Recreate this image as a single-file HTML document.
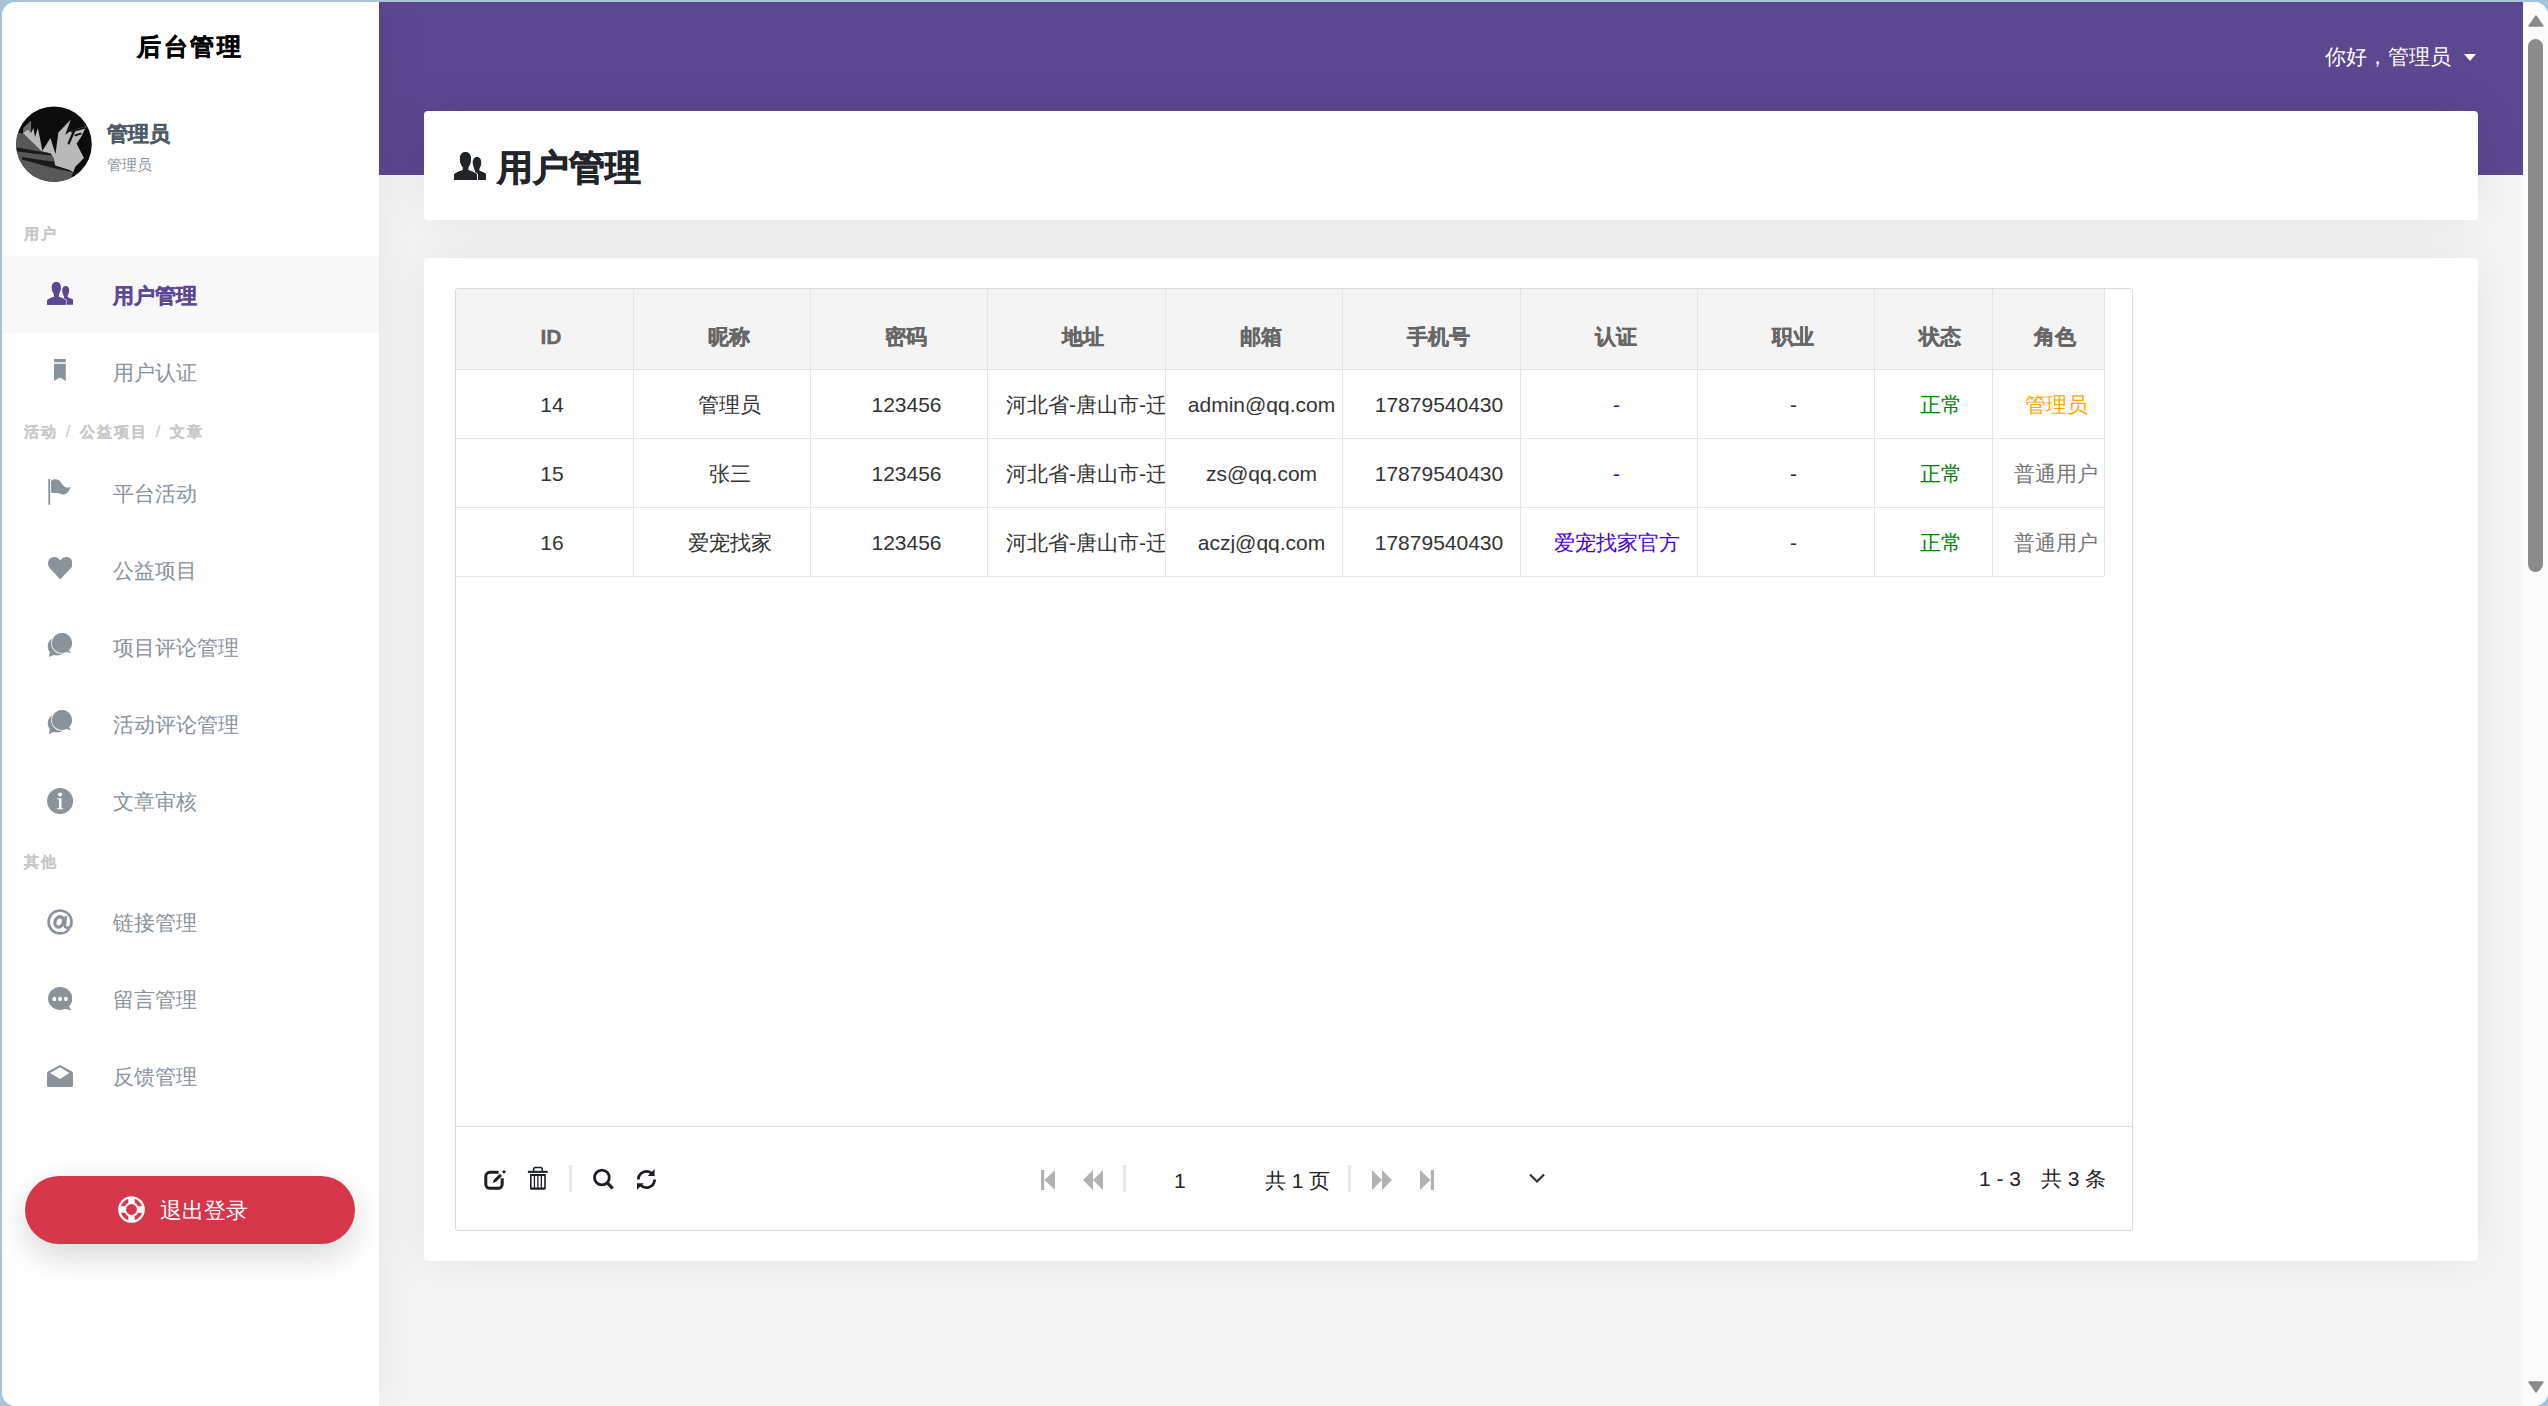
<!DOCTYPE html>
<html><head><meta charset="utf-8">
<style>
*{box-sizing:border-box;margin:0;padding:0}
html,body{width:2548px;height:1406px;overflow:hidden;background:#a6c3da;font-family:"Liberation Sans",sans-serif}
.win{position:absolute;left:2px;top:2px;width:2546px;height:1404px;border-radius:14px;overflow:hidden;background:#f5f5f5}
#pg{position:absolute;left:-2px;top:-2px;width:2548px;height:1406px}
.abs{position:absolute}
#side{position:absolute;left:0;top:0;width:379px;height:1406px;background:#fff;box-shadow:0 0 50px rgba(0,0,0,.075);z-index:3}
#hdr{position:absolute;left:379px;top:0;width:2144px;height:175px;background:#5c4791}
#sb{position:absolute;left:2523px;top:0;width:25px;height:1406px;background:#fcfcfc;z-index:5}
.t{position:absolute;white-space:nowrap;line-height:1;z-index:5}
.lab{position:absolute;left:24px;font-size:15px;font-weight:bold;color:#c9c9c9;-webkit-text-stroke:0.3px #c9c9c9;letter-spacing:2px;word-spacing:1.5px;white-space:nowrap;line-height:14px;z-index:5}
.card{position:absolute;background:#fff;border-radius:4px;z-index:1;box-shadow:0 0 50px rgba(0,0,0,.075)}
.cell{position:absolute;text-align:center;font-size:21px;line-height:21px;color:#333;overflow:hidden;white-space:nowrap;z-index:4}
.cell.hd{font-weight:bold;color:#666;-webkit-text-stroke:0.35px #666}
</style></head><body>
<div class="win"><div id="pg">
<div id="hdr"></div>
<div id="side"></div>
<div class="t" style="left:137px;top:35px;font-size:24px;color:#000;font-weight:bold;letter-spacing:2.5px;-webkit-text-stroke:0.5px #000">后台管理</div>
<svg class="abs" style="left:16px;top:106px;z-index:5" width="76" height="76" viewBox="0 0 76 76"><defs><clipPath id="cav"><circle cx="38" cy="38.2" r="37.8"/></clipPath></defs><g clip-path="url(#cav)"><rect x="-1" y="-1" width="78" height="78" fill="#0c0c0c"/>
<path fill="#b9b9b9" d="M7.1 26.4 L12.2 23.6 L15.1 27.0 L17.3 21.9 L19.1 31.0 L21.9 21.9 L26.4 44.7 L34.4 32.1 L39.5 48.1 L42.4 26.4 L54.9 13.4 L49.2 28.7 L54.9 24.7 L70.3 20.2 L65.1 31.0 L60.6 37.8 L68.0 52.1 L59.5 60.6 L57.2 66.3 L39.0 59.5 L37.8 52.6 L34.4 47.5 L25.3 45.2 L7.1 27.6Z"/>
<path fill="#585858" d="M-0.3 26.4 L7.1 27.6 L25.3 45.2 L34.4 47.5 L37.8 52.6 L39.0 59.5 L57.2 66.3 L54.9 73.1 L32.1 78.8 L-0.3 78.8Z"/>
<path fill="#1a1a1a" d="M-0.3 41.2 L25.3 45.8 L34.4 47.5 L35.6 49.5 L20.8 48.1 L-0.3 45.2Z"/>
<path fill="#1a1a1a" d="M6.0 50.9 L26.4 54.3 L37.8 55.5 L39.0 59.5 L53.8 64.0 L57.2 66.3 L37.8 62.3 L6.0 53.5Z"/>
<path fill="#6b6b6b" d="M7.1 21.9 L15.1 14.5 L15.1 26.4 L12.2 23.6 L7.1 26.4Z"/>
<path fill="#111" d="M57.7 23.0 L59.5 24.7 L53.2 39.0 L51.5 37.3Z M54.3 24.7 L69.1 20.8 L69.7 22.5 L54.9 26.4Z M58.3 28.7 L65.1 26.4 L65.7 28.2 L58.9 30.4Z"/></g></svg>
<div class="t" style="left:107px;top:123px;font-size:21px;color:#4f5b67;font-weight:bold;-webkit-text-stroke:0.4px #4f5b67">管理员</div>
<div class="t" style="left:107px;top:157px;font-size:15px;color:#8a96a2;">管理员</div>
<div class="lab" style="top:227px">用户</div>
<div class="lab" style="top:425px">活动 <span style="font-weight:normal;-webkit-text-stroke:0;font-size:17px">/</span> 公益项目 <span style="font-weight:normal;-webkit-text-stroke:0;font-size:17px">/</span> 文章</div>
<div class="lab" style="top:855px">其他</div>
<div class="abs" style="left:2px;top:256px;width:377px;height:78px;background:#f8f8f8;z-index:4"></div>
<div class="t" style="left:113px;top:285px;font-size:21px;color:#5d4896;font-weight:bold;-webkit-text-stroke:0.4px #5d4896">用户管理</div>
<div class="t" style="left:113px;top:362px;font-size:21px;color:#8a939c;">用户认证</div>
<div class="t" style="left:113px;top:483px;font-size:21px;color:#8a939c;">平台活动</div>
<div class="t" style="left:113px;top:560px;font-size:21px;color:#8a939c;">公益项目</div>
<div class="t" style="left:113px;top:637px;font-size:21px;color:#8a939c;">项目评论管理</div>
<div class="t" style="left:113px;top:714px;font-size:21px;color:#8a939c;">活动评论管理</div>
<div class="t" style="left:113px;top:791px;font-size:21px;color:#8a939c;">文章审核</div>
<div class="t" style="left:113px;top:912px;font-size:21px;color:#8a939c;">链接管理</div>
<div class="t" style="left:113px;top:989px;font-size:21px;color:#8a939c;">留言管理</div>
<div class="t" style="left:113px;top:1066px;font-size:21px;color:#8a939c;">反馈管理</div>
<svg class="abs" style="left:47px;top:282px;z-index:5" width="26.00" height="23.00" viewBox="0 0 26 23"><path fill="#5d4896" d="M18.7 4.1C21 4.1 22.2 6 22.2 8.6 22.2 10.8 21.2 12.8 20.7 13.6V15.3C22.5 15.8 24.5 16.6 26 17.6V22.7H17V15.1C16.2 12.8 15.2 10.8 15.2 8.6 15.2 6 16.4 4.1 18.7 4.1Z"/><path fill="#5d4896" stroke="#f8f8f8" stroke-width="1.6" paint-order="stroke" d="M9.3 0C12.2 0 13.8 2.4 13.8 5.8 13.8 8.5 12.6 11 11.6 12.2V14.8C14.5 15.6 17 16.8 18.7 18.3V22.7H0V18.3C1.7 16.8 4.2 15.6 7.2 14.8V12.2C6.2 11 4.8 8.5 4.8 5.8 4.8 2.4 6.4 0 9.3 0Z"/><path fill="#5d4896" d="M9.3 0C12.2 0 13.8 2.4 13.8 5.8 13.8 8.5 12.6 11 11.6 12.2V14.8C14.5 15.6 17 16.8 18.7 18.3V22.7H0V18.3C1.7 16.8 4.2 15.6 7.2 14.8V12.2C6.2 11 4.8 8.5 4.8 5.8 4.8 2.4 6.4 0 9.3 0Z"/></svg>
<svg class="abs" style="left:54px;top:359px;z-index:5" width="12" height="22" viewBox="0 0 12 22"><path fill="#8a939c" d="M0 0H11.8V3.2H0ZM0 4.8H11.8V22L5.9 18.5 0 22Z"/></svg>
<svg class="abs" style="left:48px;top:479px;z-index:5" width="24" height="26" viewBox="0 0 24 26"><path fill="#8a939c" d="M0.3 0H2.2V25.7H0.3Z"/><path fill="#8a939c" d="M3.1 2.5C3.1 0.8 5.5 0.2 7.5 0.2 10 0.2 12 1.5 14 5 15.5 7.5 17.5 8.6 20 8.6 21.5 8.6 22.5 8 22.9 7.5 21.8 11 19 15.5 15.5 15.6 13 15.6 12 14.2 9 14 6.5 13.8 4.5 14 3.1 13.8Z"/></svg>
<svg class="abs" style="left:47.7px;top:556.8px;z-index:5" width="24.6" height="22.4" viewBox="0 0 24.6 22.4"><path fill="#8a939c" d="M12.3 3.4C10.5 1.2 8.5 0 6.2 0 2.8 0 0 2.8 0 6.6 0 8.6 0.8 10.2 2 11.4L12.3 22.4 22.6 11.4C23.8 10.2 24.6 8.6 24.6 6.6 24.6 2.8 21.8 0 18.4 0 16 0 14 1.2 12.3 3.4Z"/></svg>
<svg class="abs" style="left:47px;top:632px;z-index:5" width="26" height="26" viewBox="0 0 26 26"><circle cx="10" cy="14.3" r="9.3" fill="#8a939c"/><path fill="#8a939c" d="M3 19L1.8 25.1 8 22.5Z"/><circle cx="15" cy="11" r="10" fill="#8a939c" stroke="#fff" stroke-width="1.6" paint-order="stroke"/><circle cx="15" cy="11" r="10" fill="#8a939c"/><path fill="#8a939c" d="M21 16.5L24 21.2 18 19.5Z"/></svg>
<svg class="abs" style="left:47px;top:709px;z-index:5" width="26" height="26" viewBox="0 0 26 26"><circle cx="10" cy="14.3" r="9.3" fill="#8a939c"/><path fill="#8a939c" d="M3 19L1.8 25.1 8 22.5Z"/><circle cx="15" cy="11" r="10" fill="#8a939c" stroke="#fff" stroke-width="1.6" paint-order="stroke"/><circle cx="15" cy="11" r="10" fill="#8a939c"/><path fill="#8a939c" d="M21 16.5L24 21.2 18 19.5Z"/></svg>
<svg class="abs" style="left:46.8px;top:788px;z-index:5" width="26.2" height="26.2" viewBox="0 0 26.2 26.2"><circle cx="13.1" cy="13" r="13.05" fill="#8a939c"/><circle cx="13.1" cy="6.5" r="2" fill="#fff"/><path fill="#fff" d="M10.1 10.2H14.5V20.2H16.1V21.2H10.1V20.2H12V11.2H10.1Z"/></svg>
<svg class="abs" style="left:46.8px;top:909px;z-index:5" width="26.2" height="26.2" viewBox="0 0 26.2 26.2"><path fill="none" stroke="#8a939c" stroke-width="2.7" d="M22.12 20.05A11.45 11.45 0 1 1 24.55 13.00C24.55 16.6 22.9 18.9 20.6 18.9 18.6 18.9 17.6 17.9 17.8 16L18.9 7.2"/><ellipse cx="12.2" cy="12.9" rx="4.1" ry="5.3" transform="rotate(20 12.2 12.9)" fill="none" stroke="#8a939c" stroke-width="3.3"/></svg>
<svg class="abs" style="left:47.8px;top:987px;z-index:5" width="24.4" height="24" viewBox="0 0 24.4 24"><ellipse cx="12.2" cy="11.5" rx="12.2" ry="11.45" fill="#8a939c"/><path fill="#8a939c" d="M20 17L23.1 23.6 16.5 21.5Z"/><ellipse cx="6.4" cy="11.9" rx="1.9" ry="2.2" fill="#fff"/><ellipse cx="12.1" cy="11.9" rx="1.9" ry="2.2" fill="#fff"/><ellipse cx="17.9" cy="11.9" rx="1.9" ry="2.2" fill="#fff"/></svg>
<svg class="abs" style="left:47px;top:1064.5px;z-index:5" width="26" height="22.2" viewBox="0 0 26 22.2"><path fill="#8a939c" d="M13 0L25 6.6Q26 7.3 26 8.5V20.2Q26 22.2 24 22.2H2Q0 22.2 0 20.2V8.5Q0 7.3 1 6.6Z"/><path fill="#fff" d="M13 2.3L22.4 8 13 14 3.1 8Z"/></svg>
<div class="abs" style="left:25px;top:1176px;width:330px;height:68px;border-radius:34px;background:#d63649;box-shadow:0 12px 34px rgba(0,0,0,.16);z-index:5"></div>
<svg class="abs" style="left:117.8px;top:1195.8px;z-index:5" width="27" height="27" viewBox="0 0 27 27"><circle cx="13.5" cy="13.5" r="13.3" fill="#fff"/><circle cx="13.5" cy="13.5" r="9.25" fill="none" stroke="#d63649" stroke-width="3.5"/><path fill="#fff" d="M2 10.3H25V16.7H2ZM10.3 2H16.7V25H10.3Z"/><circle cx="13.5" cy="13.5" r="5.4" fill="#d63649"/></svg>
<div class="t" style="left:160px;top:1200px;font-size:22px;color:#fff;z-index:6">退出登录</div>
<div class="t" style="left:2325px;top:46px;font-size:21px;color:#fff;">你好，管理员</div>
<div class="abs" style="left:2464px;top:54px;width:0;height:0;border-left:6.5px solid transparent;border-right:6.5px solid transparent;border-top:7px solid #fff;z-index:2"></div>
<div class="card" style="left:424px;top:111px;width:2054px;height:109px"></div>
<svg class="abs" style="left:454px;top:152px;z-index:5" width="31.98" height="28.29" viewBox="0 0 26 23"><path fill="#212529" d="M18.7 4.1C21 4.1 22.2 6 22.2 8.6 22.2 10.8 21.2 12.8 20.7 13.6V15.3C22.5 15.8 24.5 16.6 26 17.6V22.7H17V15.1C16.2 12.8 15.2 10.8 15.2 8.6 15.2 6 16.4 4.1 18.7 4.1Z"/><path fill="#212529" stroke="#fff" stroke-width="1.6" paint-order="stroke" d="M9.3 0C12.2 0 13.8 2.4 13.8 5.8 13.8 8.5 12.6 11 11.6 12.2V14.8C14.5 15.6 17 16.8 18.7 18.3V22.7H0V18.3C1.7 16.8 4.2 15.6 7.2 14.8V12.2C6.2 11 4.8 8.5 4.8 5.8 4.8 2.4 6.4 0 9.3 0Z"/><path fill="#212529" d="M9.3 0C12.2 0 13.8 2.4 13.8 5.8 13.8 8.5 12.6 11 11.6 12.2V14.8C14.5 15.6 17 16.8 18.7 18.3V22.7H0V18.3C1.7 16.8 4.2 15.6 7.2 14.8V12.2C6.2 11 4.8 8.5 4.8 5.8 4.8 2.4 6.4 0 9.3 0Z"/></svg>
<div class="t" style="left:497px;top:150px;font-size:36px;color:#212529;font-weight:bold;z-index:5;-webkit-text-stroke:0.7px #212529">用户管理</div>
<div class="card" style="left:424px;top:258px;width:2054px;height:1003px"></div>
<div class="abs" style="left:455px;top:288px;width:1678px;height:943px;border:1px solid #dbdbdb;border-radius:3px;background:#fff;z-index:2"></div>
<div class="abs" style="left:456px;top:289px;width:1649px;height:80px;background:#f4f4f4;z-index:2"></div>
<div class="abs" style="left:456px;top:369px;width:1649px;height:1px;background:#e6e6e6;z-index:3"></div>
<div class="abs" style="left:456px;top:438px;width:1649px;height:1px;background:#e6e6e6;z-index:3"></div>
<div class="abs" style="left:456px;top:507px;width:1649px;height:1px;background:#e6e6e6;z-index:3"></div>
<div class="abs" style="left:456px;top:576px;width:1649px;height:1px;background:#e6e6e6;z-index:3"></div>
<div class="abs" style="left:633px;top:289px;width:1px;height:288px;background:#e6e6e6;z-index:3"></div>
<div class="abs" style="left:810px;top:289px;width:1px;height:288px;background:#e6e6e6;z-index:3"></div>
<div class="abs" style="left:987px;top:289px;width:1px;height:288px;background:#e6e6e6;z-index:3"></div>
<div class="abs" style="left:1165px;top:289px;width:1px;height:288px;background:#e6e6e6;z-index:3"></div>
<div class="abs" style="left:1342px;top:289px;width:1px;height:288px;background:#e6e6e6;z-index:3"></div>
<div class="abs" style="left:1520px;top:289px;width:1px;height:288px;background:#e6e6e6;z-index:3"></div>
<div class="abs" style="left:1697px;top:289px;width:1px;height:288px;background:#e6e6e6;z-index:3"></div>
<div class="abs" style="left:1874px;top:289px;width:1px;height:288px;background:#e6e6e6;z-index:3"></div>
<div class="abs" style="left:1992px;top:289px;width:1px;height:288px;background:#e6e6e6;z-index:3"></div>
<div class="abs" style="left:2104px;top:289px;width:1px;height:288px;background:#e6e6e6;z-index:3"></div>
<div class="cell hd" style="left:469px;top:326px;width:164px">ID</div>
<div class="cell hd" style="left:647px;top:326px;width:163px">昵称</div>
<div class="cell hd" style="left:824px;top:326px;width:163px">密码</div>
<div class="cell hd" style="left:1001px;top:326px;width:164px">地址</div>
<div class="cell hd" style="left:1179px;top:326px;width:163px">邮箱</div>
<div class="cell hd" style="left:1356px;top:326px;width:164px">手机号</div>
<div class="cell hd" style="left:1534px;top:326px;width:163px">认证</div>
<div class="cell hd" style="left:1711px;top:326px;width:163px">职业</div>
<div class="cell hd" style="left:1888px;top:326px;width:104px">状态</div>
<div class="cell hd" style="left:2006px;top:326px;width:98px">角色</div>
<div class="cell" style="left:471px;top:394px;width:162px;">14</div>
<div class="cell" style="left:649px;top:394px;width:161px;">管理员</div>
<div class="cell" style="left:826px;top:394px;width:161px;">123456</div>
<div class="cell" style="left:988px;top:394px;width:177px;text-align:left;padding-left:18px">河北省-唐山市-迁安市</div>
<div class="cell" style="left:1181px;top:394px;width:161px;">admin@qq.com</div>
<div class="cell" style="left:1358px;top:394px;width:162px;">17879540430</div>
<div class="cell" style="left:1536px;top:394px;width:161px;color:#4b00e0;">-</div>
<div class="cell" style="left:1713px;top:394px;width:161px;">-</div>
<div class="cell" style="left:1890px;top:394px;width:102px;color:#008000;">正常</div>
<div class="cell" style="left:2008px;top:394px;width:96px;color:#ffa500;">管理员</div>
<div class="cell" style="left:471px;top:463px;width:162px;">15</div>
<div class="cell" style="left:649px;top:463px;width:161px;">张三</div>
<div class="cell" style="left:826px;top:463px;width:161px;">123456</div>
<div class="cell" style="left:988px;top:463px;width:177px;text-align:left;padding-left:18px">河北省-唐山市-迁安市</div>
<div class="cell" style="left:1181px;top:463px;width:161px;">zs@qq.com</div>
<div class="cell" style="left:1358px;top:463px;width:162px;">17879540430</div>
<div class="cell" style="left:1536px;top:463px;width:161px;color:#4b00e0;">-</div>
<div class="cell" style="left:1713px;top:463px;width:161px;">-</div>
<div class="cell" style="left:1890px;top:463px;width:102px;color:#008000;">正常</div>
<div class="cell" style="left:2008px;top:463px;width:96px;color:#777;">普通用户</div>
<div class="cell" style="left:471px;top:532px;width:162px;">16</div>
<div class="cell" style="left:649px;top:532px;width:161px;">爱宠找家</div>
<div class="cell" style="left:826px;top:532px;width:161px;">123456</div>
<div class="cell" style="left:988px;top:532px;width:177px;text-align:left;padding-left:18px">河北省-唐山市-迁安市</div>
<div class="cell" style="left:1181px;top:532px;width:161px;">aczj@qq.com</div>
<div class="cell" style="left:1358px;top:532px;width:162px;">17879540430</div>
<div class="cell" style="left:1536px;top:532px;width:161px;color:#4b00e0;">爱宠找家官方</div>
<div class="cell" style="left:1713px;top:532px;width:161px;">-</div>
<div class="cell" style="left:1890px;top:532px;width:102px;color:#008000;">正常</div>
<div class="cell" style="left:2008px;top:532px;width:96px;color:#777;">普通用户</div>
<div class="abs" style="left:456px;top:1126px;width:1676px;height:1px;background:#e2e2e2;z-index:3"></div>
<svg class="abs" style="left:482px;top:1167px;z-index:5" width="24" height="24" viewBox="0 0 24 24"><path fill="none" stroke="#1c1f24" stroke-width="3" d="M16.7 5.3H7.8A4 4 0 0 0 3.8 9.3V17.3A4 4 0 0 0 7.8 21.3H16.2A4 4 0 0 0 20.2 17.3V11.2"/><path fill="#1c1f24" d="M10.8 15.9L12 12.6 17.9 6.8 20 8.9 14.1 14.7Z"/><path fill="#1c1f24" d="M22 2.9L23.9 4.8 22 6.7 20.1 4.8Z"/></svg>
<svg class="abs" style="left:526px;top:1166px;z-index:5" width="24" height="26" viewBox="0 0 24 26"><path fill="#1c1f24" d="M1.9 4.8H21.7V6.9H1.9Z"/><path fill="none" stroke="#1c1f24" stroke-width="1.5" d="M7.6 5V3.4Q7.6 1.6 9.4 1.6H14.5Q16.3 1.6 16.3 3.4V5"/><path fill="#1c1f24" fill-rule="evenodd" d="M4 8.1H19.8V22.3Q19.8 23.8 18.3 23.8H5.5Q4 23.8 4 22.3ZM5.6 10V21.6H7.78V10ZM9.08 10V21.6H11.25V10ZM12.55 10V21.6H14.73V10ZM16.03 10V21.6H18.2V10Z"/></svg>
<div class="abs" style="left:569px;top:1165px;width:3px;height:27px;background:#e8e8e8;z-index:3"></div>
<svg class="abs" style="left:591px;top:1168px;z-index:5" width="24" height="24" viewBox="0 0 24 24"><circle cx="10.9" cy="9.5" r="7.4" fill="none" stroke="#1c1f24" stroke-width="2.8"/><path stroke="#1c1f24" stroke-width="3.2" d="M15.6 14.2L21.7 20.5"/></svg>
<svg class="abs" style="left:634px;top:1167px;z-index:5" width="24" height="24" viewBox="0 0 24 24"><path fill="none" stroke="#1c1f24" stroke-width="2.8" d="M4.4 12.5A8.1 8.1 0 0 1 18.2 6.8M20.6 12.5A8.1 8.1 0 0 1 6.8 18.2"/><path fill="#1c1f24" d="M20.6 2.1V8.9H13.7ZM3 22.8V16.2H9.8Z"/></svg>
<svg class="abs" style="left:1041px;top:1170px;z-index:3" width="14" height="20" viewBox="0 0 14 20"><path fill="#b2b2b4" d="M0 0h3.2v20H0zM14 0v20L3.5 10z"/></svg>
<svg class="abs" style="left:1083px;top:1170px;z-index:3" width="20" height="20" viewBox="0 0 20 20"><path fill="#b2b2b4" d="M10 0v20L0 10zM20 0v20L10 10z"/></svg>
<div class="abs" style="left:1123px;top:1165px;width:3px;height:27px;background:#e8e8e8;z-index:3"></div>
<div class="t" style="left:1174px;top:1170px;font-size:21px;color:#222;z-index:3">1</div>
<div class="t" style="left:1265px;top:1170px;font-size:21px;color:#222;z-index:3">共 1 页</div>
<div class="abs" style="left:1348px;top:1165px;width:3px;height:27px;background:#e8e8e8;z-index:3"></div>
<svg class="abs" style="left:1372px;top:1170px;z-index:3" width="20" height="20" viewBox="0 0 20 20"><path fill="#b2b2b4" d="M0 0v20L10 10zM10 0v20L20 10z"/></svg>
<svg class="abs" style="left:1420px;top:1170px;z-index:3" width="14" height="20" viewBox="0 0 14 20"><path fill="#b2b2b4" d="M10.8 0H14v20h-3.2zM0 0v20L10.5 10z"/></svg>
<svg class="abs" style="left:1529px;top:1173px;z-index:3" width="16" height="10" viewBox="0 0 16 10"><path fill="none" stroke="#333" stroke-width="2.2" d="M1 1.5l7 7 7-7"/></svg>
<div class="t" style="left:1979px;top:1168px;font-size:21px;color:#222;z-index:3">1 - 3</div>
<div class="t" style="left:2041px;top:1168px;font-size:21px;color:#222;z-index:3">共 3 条</div>
<div id="sb"></div>
<svg class="abs" style="left:2528px;top:15px;z-index:6" width="16" height="12" viewBox="0 0 16 12"><path d="M8 1L15 11H1z" fill="#8b8b8b" stroke="#8b8b8b" stroke-width="1.5" stroke-linejoin="round"/></svg>
<div class="abs" style="left:2528px;top:39px;width:15px;height:533px;border-radius:7.5px;background:#8b8b8b;z-index:6"></div>
<svg class="abs" style="left:2528px;top:1381px;z-index:6" width="16" height="12" viewBox="0 0 16 12"><path d="M1 1H15L8 11z" fill="#8b8b8b" stroke="#8b8b8b" stroke-width="1.5" stroke-linejoin="round"/></svg>
</div></div>
</body></html>
